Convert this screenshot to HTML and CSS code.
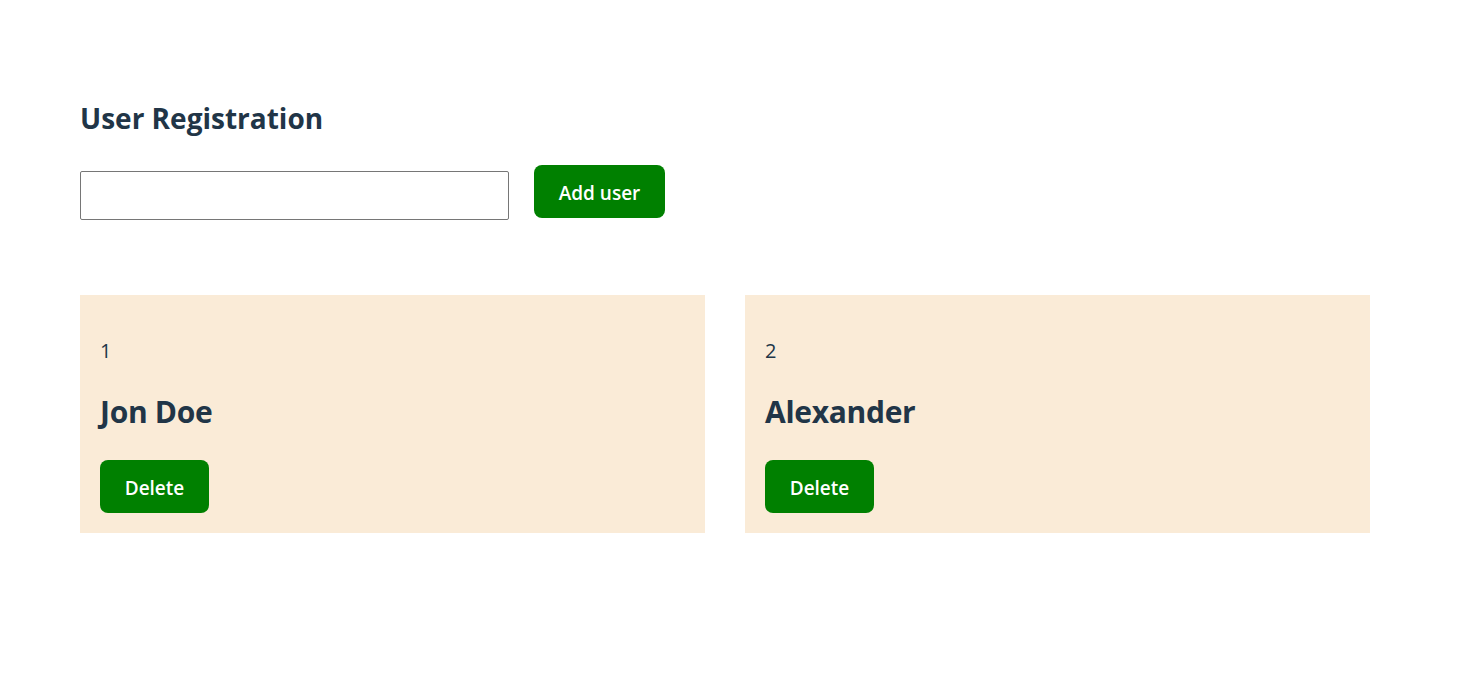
FILE: index.html
```html
<!DOCTYPE html>
<html lang="en">
<head>
<meta charset="utf-8">
<title>User Registration</title>
<link rel="stylesheet" href="styles.css">
</head>
<body>
<main class="app">
  <h1 class="title">User Registration</h1>
  <form class="add-form">
    <input class="name-input" type="text">
    <button class="btn btn-add" type="button">Add user</button>
  </form>
  <section class="cards">
    <div class="card">
      <p class="card-id">1</p>
      <h2 class="card-name">Jon Doe</h2>
      <button class="btn btn-delete" type="button">Delete</button>
    </div>
    <div class="card">
      <p class="card-id">2</p>
      <h2 class="card-name">Alexander</h2>
      <button class="btn btn-delete" type="button">Delete</button>
    </div>
  </section>
</main>
</body>
</html>
```
FILE: styles.css
```css
* { box-sizing: border-box; }
html, body { margin: 0; padding: 0; background: #ffffff; }
body {
  font-family: "Open Sans", "Noto Sans", sans-serif;
  color: #213547;
}
.app {
  padding: 98px 80px 0 80px;
}
.title {
  margin: 0;
  font-size: 28px;
  line-height: 40px;
  font-weight: 700;
}
.add-form {
  display: flex;
  align-items: flex-start;
  gap: 25px;
  margin-top: 27px;
}
.name-input {
  margin-top: 6px;
  width: 429px;
  height: 49px;
  border: 1px solid #767676;
  border-radius: 2px;
  padding: 0 8px;
  font-size: 16px;
  font-family: inherit;
}
.btn {
  display: inline-flex;
  align-items: center;
  justify-content: center;
  height: 53px;
  padding: 2px 0 0 0;
  border: none;
  border-radius: 8px;
  background: #008000;
  color: #ffffff;
  font-family: inherit;
  font-size: 19px;
  font-weight: 600;
  cursor: pointer;
}
.btn-add { width: 131px; }
.btn-delete { width: 109px; margin-top: 28px; }
.cards {
  display: grid;
  grid-template-columns: 625px 625px;
  gap: 40px;
  margin-top: 75px;
}
.card {
  background: #faebd7;
  height: 238px;
  padding: 38px 20px 20px 20px;
}
.card-id {
  margin: 0;
  font-size: 20px;
  line-height: 36px;
}
.card-name {
  margin: 23px 0 0 0;
  font-size: 30px;
  line-height: 40px;
  font-weight: 700;
  letter-spacing: -0.3px;
}
```
